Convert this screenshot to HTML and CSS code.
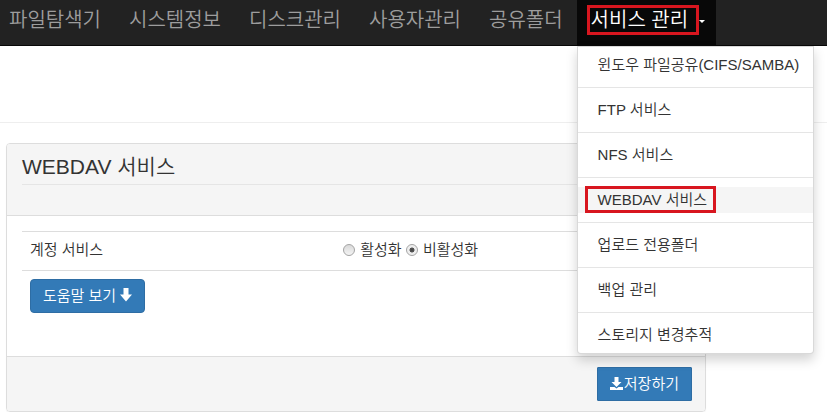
FILE: index.html
```html
<!DOCTYPE html>
<html lang="ko">
<head>
    <meta charset="UTF-8">
    <title>WEBDAV 서비스</title>
    <link rel="stylesheet" href="styles.css">
</head>
<body>
    <div id="navbar">
        <ul class="nav">
            <li><a href="#">파일탐색기</a></li>
            <li><a href="#">시스템정보</a></li>
            <li><a href="#">디스크관리</a></li>
            <li><a href="#">사용자관리</a></li>
            <li><a href="#">공유폴더</a></li>
            <li class="dropdown active">
                <a href="#"><span class="mark">서비스 관리</span><span class="caret"></span></a>
                <ul class="dropdown-menu">
                    <li><a href="#">윈도우 파일공유(CIFS/SAMBA)</a></li>
                    <li class="divider"></li>
                    <li><a href="#">FTP 서비스</a></li>
                    <li class="divider"></li>
                    <li><a href="#">NFS 서비스</a></li>
                    <li class="divider"></li>
                    <li class="current"><a href="#"><span class="mark">WEBDAV 서비스</span></a></li>
                    <li class="divider"></li>
                    <li><a href="#">업로드 전용폴더</a></li>
                    <li class="divider"></li>
                    <li><a href="#">백업 관리</a></li>
                    <li class="divider"></li>
                    <li><a href="#">스토리지 변경추적</a></li>
                </ul>
            </li>
        </ul>
    </div>

    <div class="page-header"></div>

    <div class="content">
        <div class="panel">
            <div class="panel-heading">
                <h3 class="panel-title">WEBDAV 서비스</h3>
            </div>
            <div class="panel-body">
                <table class="table">
                    <tr class="bordered">
                        <td class="label">계정 서비스</td>
                        <td>
                            <label><input type="radio" name="webdav" value="on"> 활성화</label>
                            <label><input type="radio" name="webdav" value="off" checked> 비활성화</label>
                        </td>
                    </tr>
                    <tr>
                        <td colspan="2">
                            <button class="btn">도움말 보기
                                <svg class="icon" width="12" height="14" viewBox="0 0 12 14"><path d="M3.5 0h5v6.5H12L6 13.5 0 6.5h3.5z" fill="#fff"/></svg>
                            </button>
                        </td>
                    </tr>
                </table>
            </div>
            <div class="panel-footer">
                <button class="btn btn-save"><svg class="icon" width="13" height="13" viewBox="0 0 13 13"><path d="M4.5 0h4v5h3L6.5 10l-5-5h3z" fill="#fff"/><path d="M0 10h4.5l2 1.5 2-1.5H13v3H0z" fill="#fff"/></svg>저장하기</button>
            </div>
        </div>
    </div>
</body>
</html>
```

FILE: styles.css
```css
* {
    box-sizing: border-box;
}

body {
    margin: 0;
    font-family: "Liberation Sans", "Noto Sans CJK KR", sans-serif;
    font-size: 15px;
    font-weight: 350;
    line-height: 20px;
    color: #333;
    background-color: #fff;
}

a {
    text-decoration: none;
}

#navbar {
    height: 46px;
    background-color: #222;
    border-bottom: 1px solid #080808;
}

.nav {
    list-style: none;
    margin: 0 0 0 -5px;
    padding: 0;
    display: flex;
}

.nav > li {
    position: relative;
}

.nav > li > a {
    display: block;
    height: 45px;
    padding: 8px 14px 0;
    font-size: 20px;
    line-height: 24px;
    color: #9d9d9d;
}

.nav > li.active > a {
    background-color: #080808;
    color: #fff;
    padding-right: 11px;
}

.nav > li > a .mark {
    display: inline-block;
    padding: 0 8px 0 1px;
    margin: 0 -8px 0 -1px;
    outline: 3px solid #d8161f;
}

.caret {
    display: inline-block;
    width: 0;
    height: 0;
    margin-left: 11px;
    vertical-align: middle;
    border-top: 3px solid #fff;
    border-left: 3px solid transparent;
    border-right: 3px solid transparent;
}

.dropdown-menu {
    position: absolute;
    top: 46px;
    left: 0;
    z-index: 10;
    width: 237px;
    margin: 0;
    padding: 5px 0;
    list-style: none;
    background-color: #fff;
    border: 1px solid rgba(0, 0, 0, 0.15);
    border-radius: 0 0 4px 4px;
    box-shadow: 0 6px 12px rgba(0, 0, 0, 0.175);
}

.dropdown-menu a {
    display: block;
    padding: 3px 20px;
    line-height: 20px;
    color: #333;
    white-space: nowrap;
}

.dropdown-menu .current a {
    background-color: #f5f5f5;
}

.dropdown-menu .mark {
    display: inline-block;
    padding: 1px 6px 0 10px;
    margin: -1px -6px 0 -10px;
    vertical-align: top;
    outline: 3px solid #d8161f;
}

.divider {
    height: 1px;
    margin: 9px 0;
    background-color: #e5e5e5;
}

.page-header {
    height: 77px;
    border-bottom: 1px solid #eee;
}

.content {
    padding: 20px 0 0 6px;
}

.panel {
    width: 700px;
    border: 1px solid #ddd;
    border-radius: 4px;
    box-shadow: 0 1px 1px rgba(0, 0, 0, 0.05);
}

.panel-heading {
    padding: 10px 15px;
    background-color: #f5f5f5;
    border-bottom: 1px solid #ddd;
    border-radius: 3px 3px 0 0;
}

.panel-title {
    margin: 0 0 20px;
    padding-bottom: 4px;
    font-size: 21px;
    line-height: 26px;
    font-weight: 350;
    color: #333;
    border-bottom: 1px solid #e5e5e5;
}

.panel-body {
    padding: 15px;
}

.table {
    width: 100%;
    border-collapse: collapse;
    margin-bottom: 20px;
}

.table td {
    padding: 8px;
    line-height: 20px;
    vertical-align: top;
}

.table tr.bordered td {
    padding: 8px 8px 10px;
    border-top: 1px solid #ddd;
    border-bottom: 1px solid #ddd;
}

.table td.label {
    width: 313px;
}

label {
    white-space: nowrap;
}

input[type="radio"] {
    appearance: none;
    -webkit-appearance: none;
    width: 12px;
    height: 12px;
    margin: 0 1px 0 0;
    vertical-align: -1px;
    border: 1px solid #a4a4a4;
    border-radius: 50%;
    background: linear-gradient(#d9d9d9, #f4f4f4);
}

input[type="radio"]:checked {
    background: radial-gradient(circle, #444 0, #555 2.2px, #ececec 2.8px, #f4f4f4 100%);
}

.panel-footer {
    padding: 10px 13px 10px 15px;
    text-align: right;
    background-color: #f5f5f5;
    border-top: 1px solid #ddd;
    border-radius: 0 0 3px 3px;
}

.btn {
    display: inline-block;
    height: 34px;
    padding: 6px 12px;
    font-family: inherit;
    font-size: 15px;
    font-weight: 350;
    line-height: 20px;
    color: #fff;
    background-color: #337ab7;
    border: 1px solid #2e6da4;
    border-radius: 4px;
    cursor: pointer;
}

.btn .icon {
    vertical-align: -1px;
}

.btn-save {
    border-radius: 1px;
}

.btn-save .icon {
    margin-right: 1px;
}
```
